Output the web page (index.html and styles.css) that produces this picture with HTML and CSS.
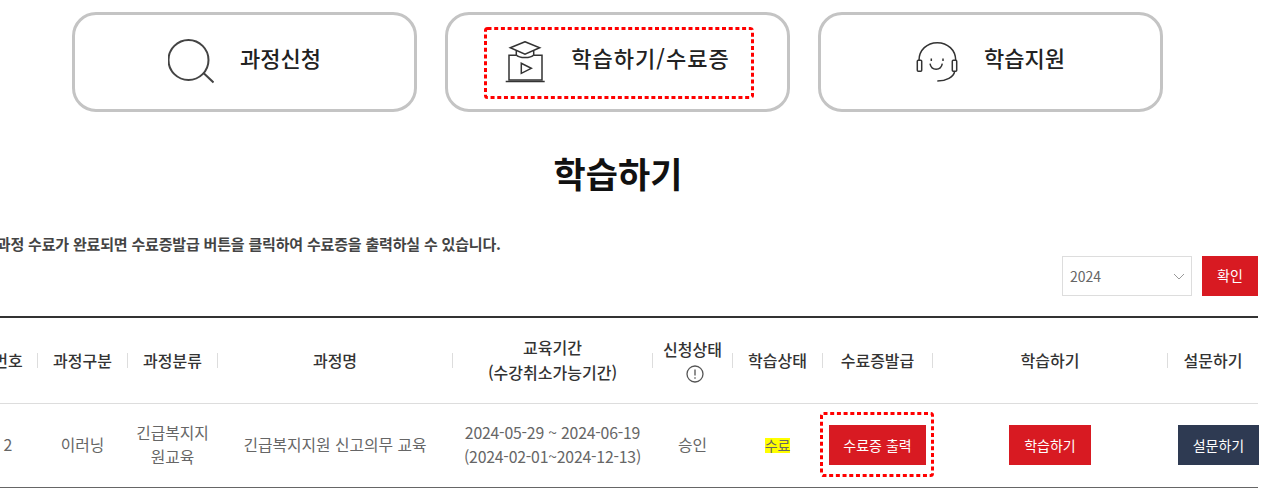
FILE: index.html
```html
<!DOCTYPE html>
<html lang="ko">
<head>
  <meta charset="UTF-8">
  <meta name="viewport" content="width=device-width, initial-scale=1">
  <title>학습하기</title>
  <link rel="stylesheet" href="styles.css">
</head>
<body>
  <div class="page">
    <nav class="tabs">
      <a class="tab">
        <svg class="tab-icon" width="46" height="46" viewBox="0 0 46 46">
          <circle cx="20.500" cy="21" r="20"/>
          <path d="M35.500 34l10 9.500"/>
        </svg>
        <span class="tab-label">과정신청</span>
      </a>
      <a class="tab">
        <svg class="tab-icon thin" width="40" height="42" viewBox="0 0 40 42">
          <path d="M5.300 6.700L20 .7l14.700 6-14.700 6.600z"/>
          <path d="M11.300 9.700v4.300c3 3.400 14.400 3.400 17.400 0V9.700"/>
          <path d="M11 14.300H4V39h33V14.300h-8"/>
          <path d="M.7 40.500h39"/>
          <path d="M16.300 22.300v10l10-5z"/>
        </svg>
        <span class="tab-label tab-label-long">학습하기/수료증</span>
        <svg class="mark mark-tab" width="270" height="72"><rect x="1.500" y="1.500" width="267" height="69" rx="2"/></svg>
      </a>
      <a class="tab">
        <svg class="tab-icon thin" width="42" height="42" viewBox="0 0 42 42">
          <path d="M3 19.300C3 9 11 1.700 21.300 1.700S39.700 9 39.700 19.300"/>
          <rect x="1.300" y="19.300" width="4.400" height="11" rx="1"/>
          <rect x="36.300" y="19.300" width="4.400" height="11" rx="1"/>
          <path d="M38.700 30.300c-1 5.700-8.500 9.700-17.400 9.700"/>
          <path d="M15.300 17.500v2.400M27 17.500v2.400"/>
          <path d="M14 22.700c1.500 7.500 10.800 7.500 12.300 0"/>
        </svg>
        <span class="tab-label">학습지원</span>
      </a>
    </nav>

    <h1 class="title">학습하기</h1>
    <p class="notice">※ 과정 수료가 완료되면 수료증발급 버튼을 클릭하여 수료증을 출력하실 수 있습니다.</p>

    <div class="filter">
      <div class="year">
        <span>2024</span>
        <svg width="12" height="7" viewBox="0 0 12 7"><path d="M1 1l5 5 5-5"/></svg>
      </div>
      <button class="btn btn-ok">확인</button>
    </div>

    <table class="list">
      <colgroup>
        <col class="c-no"><col class="c-type"><col class="c-cat"><col class="c-name"><col class="c-date">
        <col class="c-apply"><col class="c-state"><col class="c-cert"><col class="c-study"><col class="c-survey">
      </colgroup>
      <thead>
        <tr>
          <th>번호</th>
          <th>과정구분</th>
          <th>과정분류</th>
          <th>과정명</th>
          <th>교육기간<br>(수강취소가능기간)</th>
          <th>신청상태<br>
            <svg class="info" width="18" height="18" viewBox="0 0 18 18">
              <circle cx="9" cy="9" r="8"/>
              <path d="M9 4.500v6M9 12.300v1.500"/>
            </svg>
          </th>
          <th>학습상태</th>
          <th>수료증발급</th>
          <th>학습하기</th>
          <th>설문하기</th>
        </tr>
      </thead>
      <tbody>
        <tr>
          <td>2</td>
          <td>이러닝</td>
          <td>긴급복지지<br>원교육</td>
          <td>긴급복지지원 신고의무 교육</td>
          <td class="date">2024-05-29 ~ 2024-06-19<br>(2024-02-01~2024-12-13)</td>
          <td>승인</td>
          <td><span class="done">수료</span></td>
          <td class="cert-cell">
            <button class="btn btn-cert">수료증 출력</button>
            <svg class="mark mark-cert" width="114" height="65"><rect x="1.500" y="1.500" width="111" height="62" rx="2"/></svg>
          </td>
          <td><button class="btn btn-study">학습하기</button></td>
          <td><button class="btn btn-survey">설문하기</button></td>
        </tr>
      </tbody>
    </table>
  </div>
</body>
</html>
```

FILE: styles.css
```css
html, body {
  margin: 0;
  overflow: hidden;
  background: #fff;
}

body {
  font-family: "Noto Sans CJK KR", "Noto Sans", sans-serif;
  color: #333;
}

.page {
  width: 1280px;
  margin-left: -22px;
  padding-top: 12px;
}

.tabs {
  display: flex;
  justify-content: center;
  gap: 28px;
  margin-right: 1px;
}

.tab {
  position: relative;
  box-sizing: border-box;
  width: 345px;
  height: 100px;
  display: flex;
  align-items: center;
  justify-content: center;
  gap: 26px;
  border: 3px solid #c4c4c4;
  border-radius: 24px;
}

.tab-icon {
  flex: none;
  fill: none;
  stroke: #444;
  stroke-width: 2;
}

.tab-icon.thin {
  stroke: #333;
  stroke-width: 1.500;
}

.tab-label {
  font-size: 22px;
  font-weight: 500;
  line-height: 32px;
  color: #222;
  padding-bottom: 10px;
}

.tab-label-long {
  letter-spacing: 1px;
}

.mark {
  position: absolute;
  fill: none;
  stroke: #f00;
  stroke-width: 3;
  stroke-dasharray: 4 2.700;
}

.mark-tab {
  top: 12px;
  left: 36px;
}

.title {
  margin: 36px 0 0;
  font-size: 35px;
  font-weight: 700;
  line-height: 50px;
  text-align: center;
  color: #111;
}

.notice {
  margin: 36px 0 0;
  font-size: 15px;
  font-weight: 700;
  letter-spacing: -0.18px;
  line-height: 20px;
  color: #444;
}

.filter {
  display: flex;
  justify-content: flex-end;
  gap: 10px;
  margin-top: 2px;
}

.year {
  box-sizing: border-box;
  width: 130px;
  height: 40px;
  display: flex;
  align-items: center;
  justify-content: space-between;
  padding: 0 6px 0 7px;
  border: 1px solid #ddd;
  font-size: 14px;
  color: #666;
}

.year svg {
  fill: none;
  stroke: #999;
  stroke-width: 1;
}

.btn {
  display: block;
  height: 40px;
  padding: 0;
  border: none;
  background: #d81a22;
  color: #fff;
  font-family: inherit;
  font-size: 14px;
}

.btn-ok {
  width: 56px;
  padding-bottom: 3px;
}

.list {
  width: 1280px;
  margin-top: 20px;
  table-layout: fixed;
  border-collapse: collapse;
  border-top: 2px solid #333;
  border-bottom: 1px solid #666;
}

.c-no { width: 59px; }
.c-type, .c-cat, .c-state { width: 90px; }
.c-name, .c-study { width: 235px; }
.c-date { width: 200px; }
.c-apply { width: 80px; }
.c-cert { width: 110px; }
.c-survey { width: 91px; }

.list th {
  position: relative;
  height: 86px;
  padding: 0 0 0 1px;
  box-sizing: border-box;
  border-bottom: 1px solid #ddd;
  font-size: 16px;
  font-weight: 500;
  line-height: 25px;
  color: #333;
}

.list th + th::before {
  content: "";
  position: absolute;
  left: 0;
  top: 35px;
  height: 15px;
  border-left: 1px solid #ddd;
}

.list td {
  height: 83px;
  padding: 0 0 0 1px;
  font-size: 15.800px;
  line-height: 24px;
  text-align: center;
  color: #666;
}

.list .date {
  letter-spacing: -0.2px;
}

.info {
  display: block;
  margin: 3px 0 0 33px;
  fill: none;
  stroke: #555;
  stroke-width: 1.300;
}

.done {
  display: inline-block;
  background: #ff0;
  font-size: 14px;
  letter-spacing: -0.2px;
  line-height: 15px;
}

.cert-cell {
  position: relative;
}

.btn-cert {
  width: 97px;
  margin: 0 auto;
}

.btn-study {
  width: 82px;
  margin: 0 auto;
}

.btn-survey {
  width: 81px;
  margin-left: 10px;
  background: #2e3a52;
}

.mark-cert {
  top: 8px;
  left: -2px;
}
```
